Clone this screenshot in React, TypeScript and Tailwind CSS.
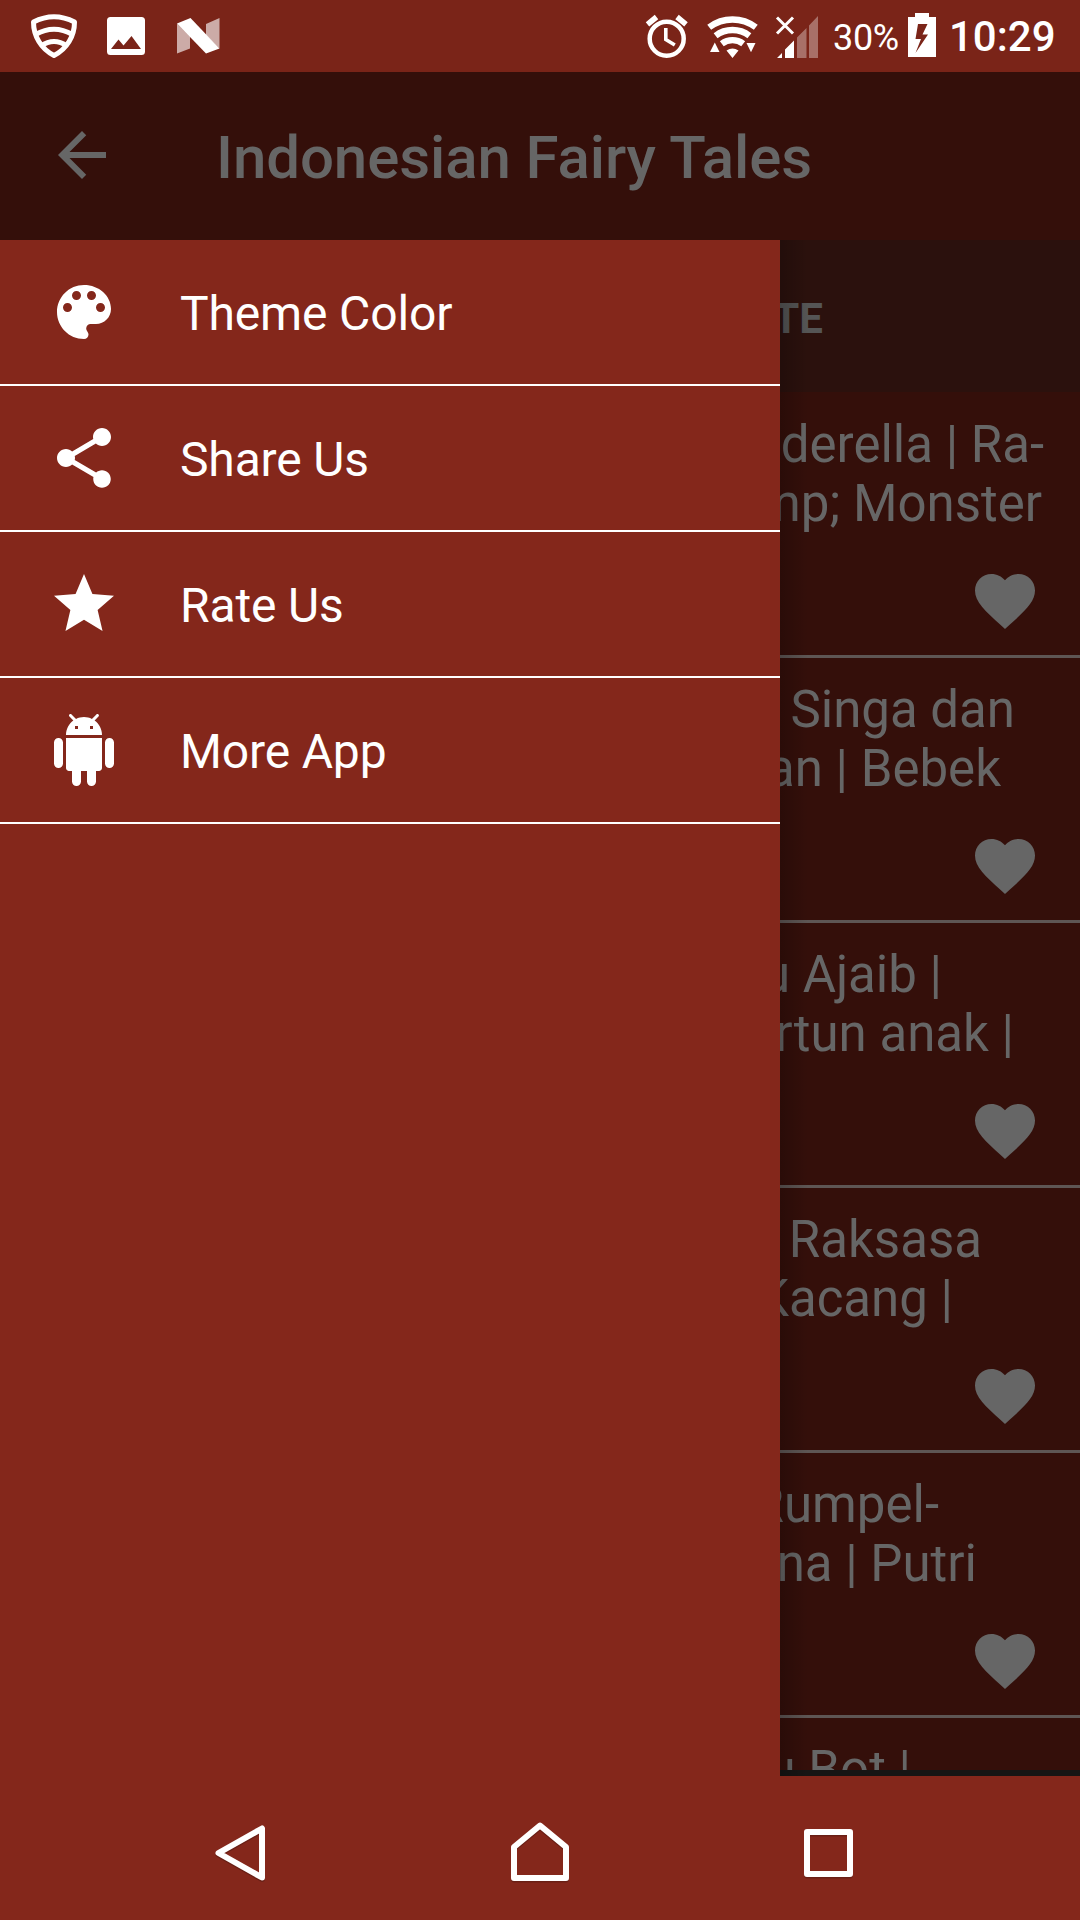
import type { ReactNode } from 'react';

const menu = [
  {
    label: 'Theme Color',
    d: 'M12 3c-4.97 0-9 4.03-9 9s4.03 9 9 9c.83 0 1.5-.67 1.5-1.5 0-.39-.15-.74-.39-1.01-.23-.26-.38-.61-.38-.99 0-.83.67-1.5 1.5-1.5H16c2.76 0 5-2.24 5-5 0-4.42-4.03-8-9-8zm-5.5 9c-.83 0-1.5-.67-1.5-1.5S5.67 9 6.5 9 8 9.67 8 10.5 7.33 12 6.5 12zm3-4C8.67 8 8 7.33 8 6.5S8.67 5 9.5 5s1.5.67 1.5 1.5S10.33 8 9.5 8zm5 0c-.83 0-1.5-.67-1.5-1.5S13.67 5 14.5 5s1.5.67 1.5 1.5S15.33 8 14.5 8zm3 4c-.83 0-1.5-.67-1.5-1.5S16.67 9 17.5 9s1.5.67 1.5 1.5-.67 1.5-1.5 1.5z',
  },
  {
    label: 'Share Us',
    d: 'M18 16.08c-.76 0-1.44.3-1.96.77L8.91 12.7c.05-.23.09-.46.09-.7s-.04-.47-.09-.7l7.05-4.11c.54.5 1.25.81 2.04.81 1.66 0 3-1.34 3-3s-1.34-3-3-3-3 1.34-3 3c0 .24.04.47.09.7L8.04 9.81C7.5 9.31 6.79 9 6 9c-1.66 0-3 1.34-3 3s1.34 3 3 3c.79 0 1.5-.31 2.04-.81l7.12 4.16c-.05.21-.08.43-.08.65 0 1.61 1.31 2.92 2.92 2.92 1.61 0 2.92-1.31 2.92-2.92s-1.31-2.92-2.92-2.92z',
  },
  {
    label: 'Rate Us',
    d: 'M12 17.27L18.18 21l-1.64-7.03L22 9.24l-7.19-.61L12 2 9.19 8.63 2 9.24l5.46 4.73L5.82 21z',
  },
  {
    label: 'More App',
    d: 'M6 18c0 .55.45 1 1 1h1v3.5c0 .83.67 1.5 1.5 1.5s1.5-.67 1.5-1.5V19h2v3.5c0 .83.67 1.5 1.5 1.5s1.5-.67 1.5-1.5V19h1c.55 0 1-.45 1-1V8H6v10zM3.5 8C2.67 8 2 8.67 2 9.5v7c0 .83.67 1.5 1.5 1.5S5 17.33 5 16.5v-7C5 8.67 4.33 8 3.5 8zm17 0c-.83 0-1.5.67-1.5 1.5v7c0 .83.67 1.5 1.5 1.5s1.5-.67 1.5-1.5v-7c0-.83-.67-1.5-1.5-1.5zm-4.97-5.84l1.3-1.3c.2-.2.2-.51 0-.71-.2-.2-.51-.2-.71 0l-1.48 1.48C13.85 1.23 12.95 1 12 1c-.96 0-1.86.23-2.66.63L7.85.15c-.2-.2-.51-.2-.71 0-.2.2-.2.51 0 .71l1.31 1.31C6.97 3.26 6 5.01 6 7h12c0-1.99-.97-3.75-2.47-4.84zM10 5H9V4h1v1zm5 0h-1V4h1v1z',
  },
];

const stories = [
  { a: 'nderella | Ra-', pa: 'pr-[36px]', b: 'amp; Monster', pb: 'pr-[38px]' },
  { a: 'Singa dan', pa: 'pr-[65px]', b: 'an | Bebek', pb: 'pr-[79px]' },
  { a: 'u Ajaib |', pa: 'pr-[138px]', b: 'rtun anak |', pb: 'pr-[66px]' },
  { a: 'Raksasa', pa: 'pr-[98px]', b: 'Kacang |', pb: 'pr-[127px]' },
  { a: 'Rumpel-', pa: 'pr-[141px]', b: 'na | Putri', pb: 'pr-[103px]' },
  { a: 'u Bot |', pa: 'pr-[169px]', b: '', pb: '' },
];

function Icon({ d, className }: { d: string; className: string }) {
  return (
    <svg viewBox="0 0 24 24" className={className} fill="currentColor">
      <path d={d} />
    </svg>
  );
}

function StatusIcon({ box, className, children }: { box: string; className: string; children: ReactNode }) {
  return (
    <svg viewBox={box} className={className} fill="none" stroke="none">
      {children}
    </svg>
  );
}

function StatusBar() {
  return (
    <div className="flex h-[72px] shrink-0 items-start bg-[#7a2418] text-white">
      <StatusIcon box="0 0 240 72" className="h-[72px] w-[240px] shrink-0">
        <g stroke="#fff" strokeWidth="5">
          <path d="M33.5 22Q54 11.500 74.500 22C74.500 36 67 49 54 55.500C41 49 33.500 36 33.500 22Z" strokeLinejoin="round" />
          <path d="M35.500 34.500Q54 24 72.500 34.500M41 46Q54 37 67 46" />
        </g>
        <path
          fill="#fff"
          fillRule="evenodd"
          d="M110.500 17h31a3.500 3.500 0 0 1 3.500 3.500v31a3.500 3.500 0 0 1-3.500 3.500h-31a3.500 3.500 0 0 1-3.500-3.500v-31a3.500 3.500 0 0 1 3.500-3.500zM111 49h30l-9.500-13-8 9.500-5-6z"
        />
        <path fill="#fff" fillOpacity=".62" d="M177 23.500V53.500L190 48.500V36.500ZM206 24L219.500 18V48.500L206 35Z" />
        <path fill="#fff" d="M177 23.500L190.500 18L219.500 48.500L206 53.500Z" />
      </StatusIcon>
      <StatusIcon box="640 0 184 72" className="ml-[400px] h-[72px] w-[184px] shrink-0">
        <g stroke="#fff">
          <circle cx="666.700" cy="38.700" r="17" strokeWidth="4.500" />
          <path d="M665.800 28V39.500L674.800 45" strokeWidth="3.600" />
          <path d="M647.500 24.300L656.500 17M686 24.300L677 17" strokeWidth="5.500" />
        </g>
        <g stroke="#fff" strokeWidth="6.400">
          <path d="M709.200 27.300A38.700 38.700 0 0 1 755.800 27.300" />
          <path d="M715.600 35.700A28 28 0 0 1 749.400 35.700" />
          <path d="M721.800 43.700A17.800 17.800 0 0 1 743.200 43.700" />
        </g>
        <path fill="#fff" d="M732.500 58L726.500 50.500Q732.500 46.500 738.500 50.500ZM710 52H719.500L714.800 42.500ZM746.500 43H755.500L751 52.200Z" />
        <path stroke="#fff" strokeWidth="3" d="M777 17.500L793 33.500M793 17.500L777 33.500" />
        <path fill="#fff" d="M777 58H782V53ZM785 58V49.500L794 40.500V58Z" />
        <path fill="#fff" fillOpacity=".35" d="M797 58V37.500L806.500 28V58ZM809 58V25.500L818 16V58Z" />
      </StatusIcon>
      <span className="ml-[9px] mt-[17px] w-[75px] whitespace-nowrap text-[36px] leading-[42px] tracking-[-0.3px]">30%</span>
      <StatusIcon box="908 0 28 72" className="h-[72px] w-[28px] shrink-0">
        <path fill="#fff" fillRule="evenodd" d="M908 17H915V13H929V17H936V57H908ZM918 24L915.500 39H921L915.500 53L928 34.500H922.500L927.500 24Z" />
      </StatusIcon>
      <span className="ml-[13px] mt-[12px] whitespace-nowrap text-[42px] font-medium leading-[50px]">10:29</span>
    </div>
  );
}

export default function App() {
  return (
    <div className="flex h-[1920px] w-[1080px] flex-col overflow-hidden bg-[#84271b] font-['Roboto',sans-serif]">
      <StatusBar />
      <header className="flex h-[168px] shrink-0 items-start bg-[#340f0a] text-[#666]">
        <Icon className="ml-[46px] mt-[47px] size-[72px]" d="M20 11H7.83l5.59-5.59L12 4l-8 8 8 8 1.41-1.41L7.83 13H20v-2z" />
        <h1 className="ml-[98px] mt-[51px] whitespace-nowrap text-[60px] font-medium leading-[70px] tracking-[-0.1px]">Indonesian Fairy Tales</h1>
      </header>

      <div className="relative h-[1536px] shrink-0">
        <main className="flex h-full flex-col overflow-hidden border-b-[6px] border-[#161514] bg-[#340f0a] text-[#666]">
          <div className="flex h-[152px] shrink-0 items-center justify-end bg-[#2b110d] pr-[257px] pt-[4px] text-[42px] font-bold text-[#555]">
            FAVORITE
          </div>
          <div className="flex flex-col pt-px">
            {stories.map((s) => (
              <article key={s.a} className="flex h-[265px] shrink-0 flex-col items-end border-b-[3px] border-[#5e5654] pt-[22px] text-right text-[51px] leading-[59px]">
                <p className={`h-[59px] whitespace-nowrap ${s.pa}`}>{s.a}</p>
                <p className={`h-[59px] whitespace-nowrap ${s.pb}`}>{s.b}</p>
                <Icon
                  className="mr-[39px] mt-[32px] size-[72px]"
                  d="M12 21.35l-1.45-1.32C5.4 15.36 2 12.28 2 8.5 2 5.42 4.42 3 7.5 3c1.74 0 3.41.81 4.5 2.09C13.09 3.81 14.76 3 16.5 3 19.58 3 22 5.42 22 8.5c0 3.78-3.4 6.86-8.55 11.54L12 21.35z"
                />
              </article>
            ))}
          </div>
        </main>

        <aside className="absolute inset-y-0 left-0 w-[780px] bg-[#84271b] text-white">
          <ul>
            {menu.map((m) => (
              <li key={m.label} className="flex h-[146px] items-center border-b-2 border-white pl-12">
                <Icon className="size-[72px]" d={m.d} />
                <span className="ml-[60px] mt-1 text-[48px] tracking-[-0.15px]">{m.label}</span>
              </li>
            ))}
          </ul>
        </aside>
        <div className="absolute inset-y-0 left-[780px] w-[28px] bg-linear-to-r from-black/20 to-transparent" />
      </div>

      <nav className="flex h-[144px] shrink-0 items-center bg-[#84271b]">
        <svg viewBox="180 1776 720 144" className="ml-[180px] h-[144px] w-[720px]" fill="none" strokeLinejoin="round">
          <g stroke="#000" strokeOpacity=".2" strokeWidth="6" transform="translate(0 1.5)">
            <path d="M262 1828.500V1877.500L218.500 1853Z" />
            <path d="M514 1878V1847L540 1825.500L566 1847V1878Z" />
            <rect x="807" y="1832" width="43" height="42" />
          </g>
          <g stroke="#fff" strokeWidth="6">
            <path d="M262 1828.500V1877.500L218.500 1853Z" />
            <path d="M514 1878V1847L540 1825.500L566 1847V1878Z" />
            <rect x="807" y="1832" width="43" height="42" />
          </g>
        </svg>
      </nav>
    </div>
  );
}
